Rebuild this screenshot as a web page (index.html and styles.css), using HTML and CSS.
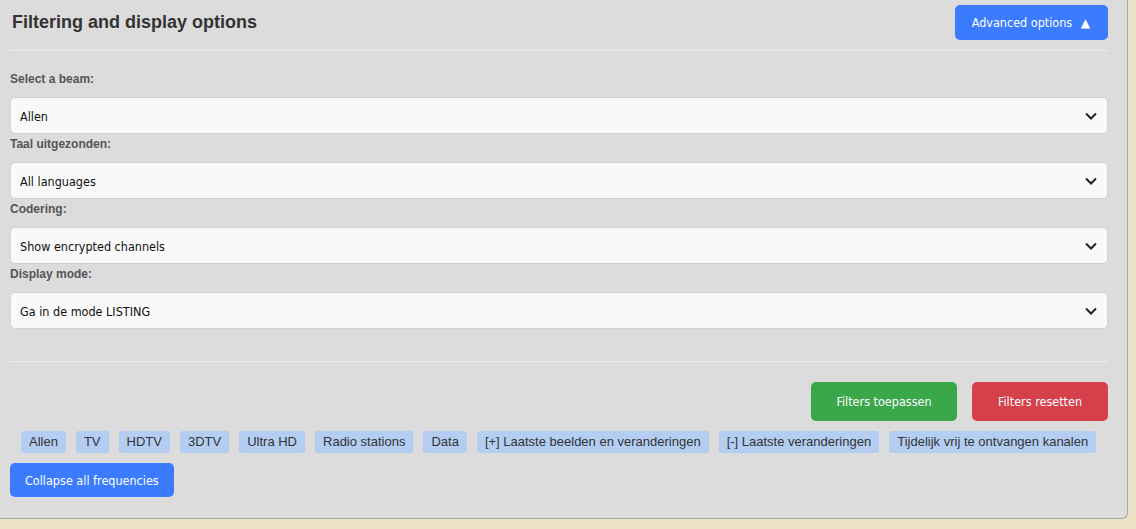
FILE: index.html
```html
<!DOCTYPE html>
<html lang="nl">
<head>
    <meta charset="UTF-8">
    <meta name="viewport" content="width=device-width, initial-scale=1.0">
    <title>Filtering and display options</title>
    <link rel="stylesheet" href="styles.css">
</head>
<body>
<div class="panel">
    <div class="panel-header">
        <h3>Filtering and display options</h3>
        <button class="btn btn-blue btn-advanced">Advanced options <span class="arrow">&#9650;</span></button>
    </div>

    <div class="filters">
        <label for="beam">Select a beam:</label>
        <div class="select-wrap">
            <select id="beam">
                <option>Allen</option>
            </select>
            <svg class="chevron" width="12" height="8" viewBox="0 0 12 8"><path d="M1 1.5 L6 6.5 L11 1.5" fill="none" stroke="#222" stroke-width="2"/></svg>
        </div>

        <label for="lang">Taal uitgezonden:</label>
        <div class="select-wrap">
            <select id="lang">
                <option>All languages</option>
            </select>
            <svg class="chevron" width="12" height="8" viewBox="0 0 12 8"><path d="M1 1.5 L6 6.5 L11 1.5" fill="none" stroke="#222" stroke-width="2"/></svg>
        </div>

        <label for="coding">Codering:</label>
        <div class="select-wrap">
            <select id="coding">
                <option>Show encrypted channels</option>
            </select>
            <svg class="chevron" width="12" height="8" viewBox="0 0 12 8"><path d="M1 1.5 L6 6.5 L11 1.5" fill="none" stroke="#222" stroke-width="2"/></svg>
        </div>

        <label for="mode">Display mode:</label>
        <div class="select-wrap">
            <select id="mode">
                <option>Ga in de mode LISTING</option>
            </select>
            <svg class="chevron" width="12" height="8" viewBox="0 0 12 8"><path d="M1 1.5 L6 6.5 L11 1.5" fill="none" stroke="#222" stroke-width="2"/></svg>
        </div>
    </div>

    <div class="actions">
        <button class="btn btn-green">Filters toepassen</button>
        <button class="btn btn-red">Filters resetten</button>
    </div>

    <div class="tags">
        <span class="tag">Allen</span>
        <span class="tag">TV</span>
        <span class="tag">HDTV</span>
        <span class="tag">3DTV</span>
        <span class="tag">Ultra HD</span>
        <span class="tag">Radio stations</span>
        <span class="tag">Data</span>
        <span class="tag">[+] Laatste beelden en veranderingen</span>
        <span class="tag">[-] Laatste veranderingen</span>
        <span class="tag">Tijdelijk vrij te ontvangen kanalen</span>
    </div>

    <button class="btn btn-blue btn-collapse">Collapse all frequencies</button>
</div>
</body>
</html>
```

FILE: styles.css
```css
body {
    margin: 0;
    background-color: #ece2c7;
    font-family: "Liberation Sans", Arial, sans-serif;
}

.panel {
    box-sizing: border-box;
    width: 1128px;
    height: 519px;
    padding: 0 19px 0 10px;
    background-color: #dcdcdc;
    border-right: 1px solid #a8a8a8;
    border-bottom: 1px solid #a8a8a8;
    border-bottom-right-radius: 6px;
}

.panel-header {
    display: flex;
    align-items: center;
    justify-content: space-between;
    padding: 5px 0 10px;
    border-bottom: 1px solid #ececec;
}

.panel-header h3 {
    margin: 0 0 0 2px;
    font-size: 18px;
    font-weight: bold;
    color: #333;
}

.btn {
    border: none;
    border-radius: 5px;
    color: #fff;
    font-family: "DejaVu Sans Condensed", "DejaVu Sans", sans-serif;
    font-size: 12.5px;
    cursor: pointer;
}

.btn-blue {
    background-color: #3b7bfd;
}

.btn-green {
    background-color: #3ba74b;
    width: 146px;
    height: 39px;
}

.btn-red {
    background-color: #d5404b;
    width: 136px;
    height: 39px;
}

.btn-advanced {
    height: 35px;
    padding: 0 18px 0 17px;
}

.btn-advanced .arrow {
    margin-left: 5px;
    font-family: "DejaVu Sans", sans-serif;
    font-size: 12px;
}

.btn-collapse {
    display: block;
    height: 34px;
    padding: 0 15px;
}

.filters {
    padding-top: 18px;
}

.filters label {
    display: block;
    margin: 3px 0 10px;
    font-size: 12px;
    line-height: 15px;
    font-weight: bold;
    color: #555;
}

.select-wrap {
    position: relative;
}

.select-wrap select {
    box-sizing: border-box;
    width: 100%;
    height: 37px;
    padding: 1px 30px 0 9px;
    border: 1px solid #d2d2d2;
    border-radius: 5px;
    background-color: #f9f9f9;
    color: #111;
    font-family: "DejaVu Sans Condensed", "DejaVu Sans", sans-serif;
    font-size: 12.5px;
    appearance: none;
    -webkit-appearance: none;
}

.chevron {
    position: absolute;
    right: 11px;
    top: 15px;
    pointer-events: none;
}

.actions {
    display: flex;
    justify-content: flex-end;
    gap: 15px;
    margin-top: 32px;
    padding-top: 20px;
    border-top: 1px solid #ececec;
}

.tags {
    display: flex;
    flex-wrap: wrap;
    gap: 10px;
    margin: 10px 0;
    padding-left: 11px;
}

.tag {
    padding: 3px 8px 4px;
    font-size: 13px;
    line-height: 15px;
    color: #333;
    background-color: #b3cef2;
    border-radius: 3px;
}
```
